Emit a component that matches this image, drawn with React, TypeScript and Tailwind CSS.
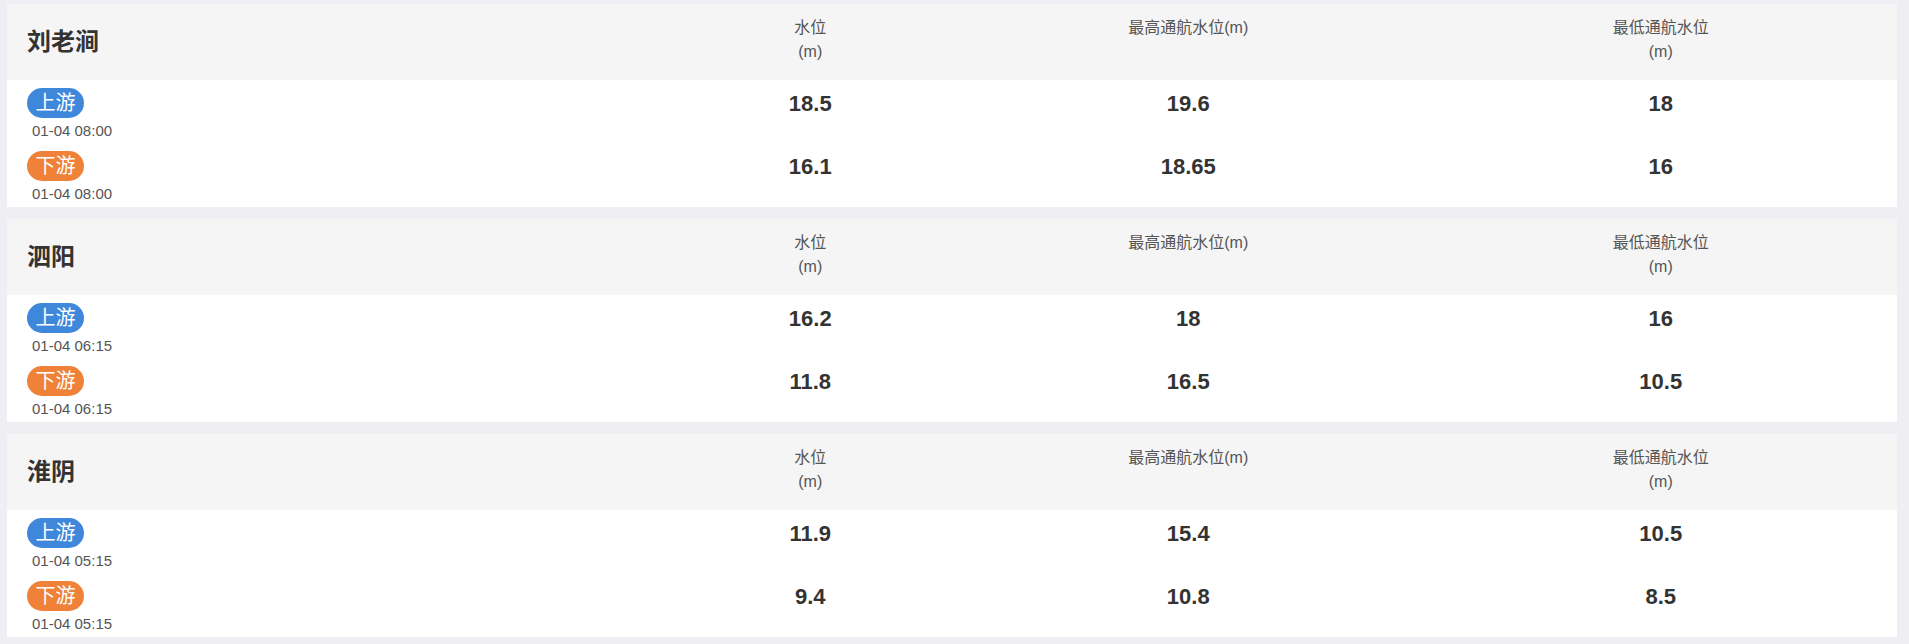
const stations = [
  {
    name: "刘老涧",
    rows: [
      { side: "上游", time: "01-04 08:00", level: "18.5", max: "19.6", min: "18" },
      { side: "下游", time: "01-04 08:00", level: "16.1", max: "18.65", min: "16" },
    ],
  },
  {
    name: "泗阳",
    rows: [
      { side: "上游", time: "01-04 06:15", level: "16.2", max: "18", min: "16" },
      { side: "下游", time: "01-04 06:15", level: "11.8", max: "16.5", min: "10.5" },
    ],
  },
  {
    name: "淮阴",
    rows: [
      { side: "上游", time: "01-04 05:15", level: "11.9", max: "15.4", min: "10.5" },
      { side: "下游", time: "01-04 05:15", level: "9.4", max: "10.8", min: "8.5" },
    ],
  },
];

const cols = "grid grid-cols-[35fr_15fr_25fr_25fr]";

function StationCard({ station }: { station: (typeof stations)[number] }) {
  return (
    <div className="bg-white pb-px">
      {/* header */}
      <div className={`${cols} h-[76px] bg-[#f5f5f5]`}>
        <div className="flex items-center pl-5 text-[24px] font-bold text-[#333]">
          {station.name}
        </div>
        <div className="pt-3 text-center text-[16px] leading-6 text-[#555]">
          水位
          <br />
          (m)
        </div>
        <div className="pt-3 text-center text-[16px] leading-6 text-[#555]">
          最高通航水位(m)
        </div>
        <div className="pt-3 text-center text-[16px] leading-6 text-[#555]">
          最低通航水位
          <br />
          (m)
        </div>
      </div>

      {/* rows */}
      {station.rows.map((row) => (
        <div key={row.side} className={`${cols} pt-2 pb-[2px]`}>
          <div className="pl-5">
            <div
              className={`flex h-[30px] w-[57px] items-center justify-center rounded-full text-[20px] text-white ${
                row.side === "上游" ? "bg-[#3f87db]" : "bg-[#ef8238]"
              }`}
            >
              {row.side}
            </div>
            <div className="mt-[2px] ml-[5px] text-[15px] leading-[21px] text-[#555]">
              {row.time}
            </div>
          </div>
          <div className="flex h-[30px] items-center justify-center text-[22px] font-bold text-[#333]">
            {row.level}
          </div>
          <div className="flex h-[30px] items-center justify-center text-[22px] font-bold text-[#333]">
            {row.max}
          </div>
          <div className="flex h-[30px] items-center justify-center text-[22px] font-bold text-[#333]">
            {row.min}
          </div>
        </div>
      ))}
    </div>
  );
}

export default function App() {
  return (
    <div
      className="flex min-h-screen flex-col gap-3 bg-[#eeeef3] pt-1 pr-3 pb-2 pl-[7px]"
      style={{ fontFamily: '"Liberation Sans", "Noto Sans CJK SC", sans-serif' }}
    >
      {stations.map((s) => (
        <StationCard key={s.name} station={s} />
      ))}
    </div>
  );
}
